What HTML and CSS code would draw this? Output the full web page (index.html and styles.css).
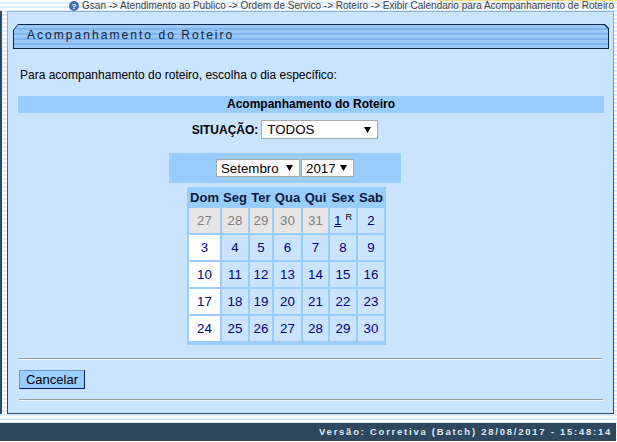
FILE: index.html
```
<!DOCTYPE html>
<html lang="pt">
<head>
<meta charset="utf-8">
<title>Acompanhamento do Roteiro</title>
<link rel="stylesheet" href="styles.css">
</head>
<body>
<div class="top-accent"></div>
<div class="crumb">
  <svg class="help" width="10" height="10" viewBox="0 0 10 10"><circle cx="5" cy="5" r="5" fill="#3f70b0"/><text x="5" y="8.2" text-anchor="middle" class="help-q">?</text></svg>
  <span>Gsan -&gt; Atendimento ao Publico -&gt; Ordem de Servico -&gt; Roteiro -&gt; Exibir Calendario para Acompanhamento de Roteiro</span>
</div>
<div class="shell">
  <main class="panel">
    <header class="title-bar"><div class="title-fill">Acompanhamento do Roteiro</div></header>
    <p class="intro">Para acompanhamento do roteiro, escolha o dia específico:</p>
    <h2 class="section">Acompanhamento do Roteiro</h2>
    <div class="calendar-col">
      <div class="filter">
        <b>SITUAÇÃO:</b>
        <select class="sel sel-sit"><option>TODOS</option></select>
      </div>
      <div class="month-bar">
        <select class="sel sel-month"><option>Setembro</option></select>
        <select class="sel sel-year"><option>2017</option></select>
      </div>
      <table class="cal">
        <thead>
          <tr><th>Dom</th><th>Seg</th><th>Ter</th><th>Qua</th><th>Qui</th><th>Sex</th><th>Sab</th></tr>
        </thead>
        <tbody>
          <tr><td class="off">27</td><td class="off">28</td><td class="off">29</td><td class="off">30</td><td class="off">31</td><td><a href="#">1</a><sup>R</sup></td><td>2</td></tr>
          <tr><td class="sun">3</td><td>4</td><td>5</td><td>6</td><td>7</td><td>8</td><td>9</td></tr>
          <tr><td class="sun">10</td><td>11</td><td>12</td><td>13</td><td>14</td><td>15</td><td>16</td></tr>
          <tr><td class="sun">17</td><td>18</td><td>19</td><td>20</td><td>21</td><td>22</td><td>23</td></tr>
          <tr><td class="sun">24</td><td>25</td><td>26</td><td>27</td><td>28</td><td>29</td><td>30</td></tr>
        </tbody>
      </table>
    </div>
    <hr class="rule rule-top">
    <button class="btn" type="button">Cancelar</button>
    <hr class="rule rule-bottom">
  </main>
</div>
<footer class="foot">Versão: Corretiva (Batch) 28/08/2017 - 15:48:14</footer>
</body>
</html>
```
FILE: styles.css
```
* { box-sizing: border-box; }
html, body { margin: 0; height: 442px; overflow: hidden; }
body {
  position: relative;
  font-family: "Liberation Sans", Arial, sans-serif;
  background: repeating-linear-gradient(#ffffff 0 2px, #dcebfa 2px 4px);
  display: flex;
  flex-direction: column;
}
.top-accent {
  position: absolute;
  top: 0;
  left: 437px;
  right: 0;
  height: 1px;
  background: #f5dd80;
}
.crumb {
  height: 11px;
  display: flex;
  justify-content: flex-end;
  align-items: center;
  gap: 3px;
  padding-right: 3px;
  font-size: 10px;
  line-height: 11px;
  color: #444;
  white-space: nowrap;
}
.help { flex: none; }
.help-q { font: bold 8px "Liberation Sans", sans-serif; fill: #fff; }
.shell {
  height: 403px;
  padding: 0 3px 0 5px;
  border-left: 2px solid #2f4860;
}
.panel {
  height: 100%;
  background: #cae3ff;
  border: 1px solid;
  border-image: linear-gradient(#8fb4d8, #2f4860 50%) 1;
  padding: 12px 9px 0 10px;
  display: flex;
  flex-direction: column;
}
.title-bar {
  margin: 0 -5px;
  height: 25px;
  flex: none;
  padding: 1px;
  background: #10263c;
  clip-path: polygon(5px 0, calc(100% - 4px) 0, 100% 4px, 100% 100%, 0 100%, 0 6px);
}
.title-fill {
  height: 100%;
  background: repeating-linear-gradient(#9cc8f8 0 3px, #80b4ee 3px 5px);
  clip-path: polygon(4px 0, calc(100% - 4px) 0, 100% 4px, 100% 100%, 0 100%, 0 5px);
  padding-left: 13px;
  font-size: 12px;
  line-height: 21px;
  letter-spacing: 2.05px;
  color: #10263c;
}
.intro {
  margin: 19px 0 0 2px;
  font-size: 12px;
  line-height: 14px;
  color: #000;
}
.section {
  margin: 14px 0 0;
  height: 17px;
  background: #99ccff;
  font-size: 12px;
  line-height: 17px;
  font-weight: bold;
  text-align: center;
  color: #000;
  flex: none;
}
.calendar-col {
  width: 534px;
  flex: none;
}
.filter {
  margin-top: 7px;
  display: flex;
  justify-content: center;
  align-items: center;
  gap: 3px;
  font-size: 12px;
  color: #000;
  height: 19px;
}
.sel {
  appearance: none;
  -webkit-appearance: none;
  font-family: "Liberation Sans", Arial, sans-serif;
  font-size: 13.3px;
  padding: 0 0 0 4px;
  background: #fff url("data:image/svg+xml,%3Csvg xmlns='http://www.w3.org/2000/svg' width='7' height='6'%3E%3Cpath d='M0 0h7L3.5 6z' fill='%23000'/%3E%3C/svg%3E") no-repeat right 6px center;
  border: 1px solid #a9a9a9;
  border-radius: 0;
  color: #000;
}
.sel-sit { width: 117px; height: 19px; padding-left: 5px; }
.sel-month { width: 84px; height: 18px; }
.sel-year { width: 53px; height: 18px; }
.month-bar {
  margin: 14px 0 0 151px;
  width: 232px;
  height: 30px;
  background: #99ccff;
  display: flex;
  justify-content: center;
  align-items: center;
  gap: 1px;
}
.cal {
  margin: 4px 0 0 169px;
  border-collapse: separate;
  border-spacing: 2px;
  padding-bottom: 2px;
  background: #99ccff;
  table-layout: fixed;
}
.cal th {
  font-size: 13px;
  font-weight: bold;
  color: #0a1a3a;
  padding: 0;
  height: 17px;
  line-height: 17px;
  white-space: nowrap;
}
.cal td {
  padding: 0;
  text-align: center;
  height: 25px;
  background: #cae3ff;
  color: #000080;
  font-size: 13.3px;
  white-space: nowrap;
}
.cal td.off { background: #e6e6e6; color: #808080; }
.cal td.sun { background: #fff; }
.cal a { color: #000080; }
.cal sup { font-size: 9px; line-height: 0; margin-left: 4px; color: #000; }
.cal th:nth-child(1) { width: 31px; }
.cal th:nth-child(2) { width: 26px; }
.cal th:nth-child(3) { width: 22px; }
.cal th:nth-child(4) { width: 27px; }
.cal th:nth-child(5) { width: 25px; }
.cal th:nth-child(6) { width: 26px; }
.cal th:nth-child(7) { width: 26px; }
.rule {
  flex: none;
  margin: 0 1px;
  border: 0;
  height: 2px;
  background: linear-gradient(#999 0 1px, #eef6ff 1px 2px);
}
.rule-top { margin-top: 13px; }
.btn {
  flex: none;
  align-self: flex-start;
  margin: 10px 0 0 1px;
  width: 66px;
  height: 19px;
  padding: 0;
  font-family: "Liberation Sans", Arial, sans-serif;
  font-size: 13px;
  color: #000;
  background: #99ccff;
  border: 1px solid;
  border-color: #6f94c8 #001a66 #001a66 #6f94c8;
}
.rule-bottom { margin-top: 10px; }
.foot {
  margin: 9px 1px 0 0;
  height: 18px;
  flex: none;
  background: #2f4860;
  color: #dfe8f2;
  font-size: 9.5px;
  font-weight: bold;
  letter-spacing: 1.75px;
  line-height: 17px;
  text-align: right;
  padding-right: 4px;
  white-space: nowrap;
}
```
